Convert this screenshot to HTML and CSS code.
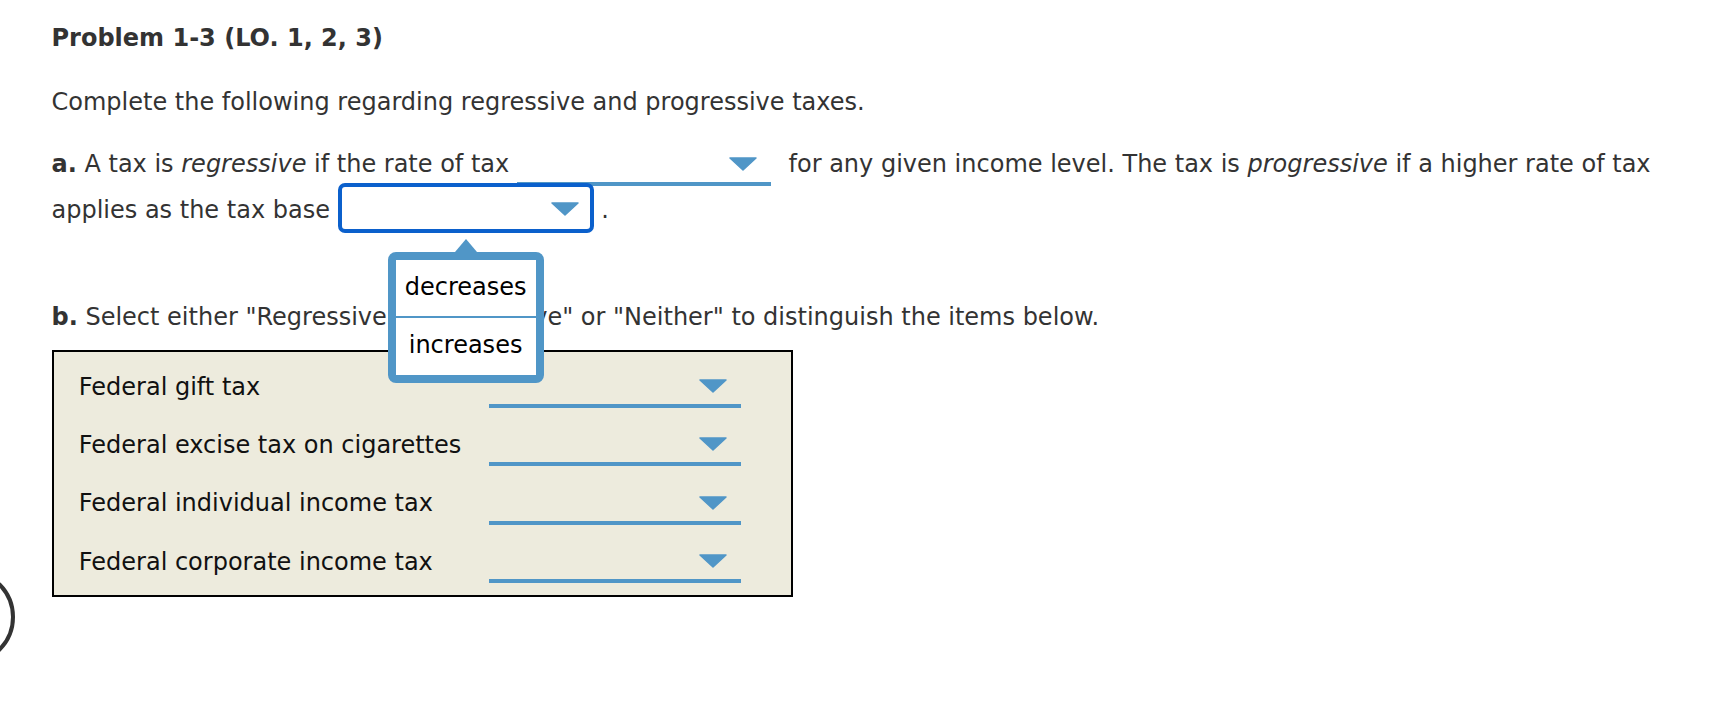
FILE: index.html
```html
<!DOCTYPE html>
<html lang="en">
<head>
<meta charset="utf-8">
<title>Problem 1-3</title>
<link rel="stylesheet" href="styles.css">
</head>
<body>
<div class="page">
  <h1 class="title">Problem 1-3 (LO. 1, 2, 3)</h1>
  <p class="intro">Complete the following regarding regressive and progressive taxes.</p>
  <p class="part-a"><b>a.</b> A tax is <i>regressive</i> if the rate of tax <span class="dd dd-first"><svg class="arrow" viewBox="0 0 28 14" width="28" height="14"><polygon points="1,1 27,1 14,13" /></svg></span> <span>for any given income level. The tax is </span><i>progressive</i><span> if a higher rate of tax</span> <span>applies as the tax base</span> <span class="dd dd-focus"><svg class="arrow" viewBox="0 0 28 14" width="28" height="14"><polygon points="1,1 27,1 14,13" /></svg><span class="menu"><span class="menu-item">decreases</span><span class="menu-item">increases</span></span></span> .</p>
  <p class="part-b"><b>b.</b> Select either "Regressive," "Progressive" or "Neither" to distinguish the items below.</p>
  <div class="items">
    <div class="item-row"><span class="item-label">Federal gift tax</span><span class="dd dd-row"><svg class="arrow" viewBox="0 0 28 14" width="28" height="14"><polygon points="1,1 27,1 14,13" /></svg></span></div>
    <div class="item-row"><span class="item-label">Federal excise tax on cigarettes</span><span class="dd dd-row"><svg class="arrow" viewBox="0 0 28 14" width="28" height="14"><polygon points="1,1 27,1 14,13" /></svg></span></div>
    <div class="item-row"><span class="item-label">Federal individual income tax</span><span class="dd dd-row"><svg class="arrow" viewBox="0 0 28 14" width="28" height="14"><polygon points="1,1 27,1 14,13" /></svg></span></div>
    <div class="item-row"><span class="item-label">Federal corporate income tax</span><span class="dd dd-row"><svg class="arrow" viewBox="0 0 28 14" width="28" height="14"><polygon points="1,1 27,1 14,13" /></svg></span></div>
  </div>
</div>
<div class="fab"></div>
</body>
</html>
```

FILE: styles.css
```css
* { box-sizing: border-box; }

html, body {
  margin: 0;
  padding: 0;
  background: #fff;
}

body {
  position: relative;
  height: 724px;
  overflow: hidden;
  font-family: "DejaVu Sans", Verdana, sans-serif;
  font-size: 24px;
  color: #333;
}

.page {
  padding: 23.4px 40px 0 51.5px;
}

.title {
  margin: 0;
  font-size: 24px;
  font-weight: bold;
  line-height: 30px;
}

.intro {
  margin: 33.3px 0 0;
  line-height: 30px;
}

.part-a {
  margin: 24.3px 0 0;
  line-height: 46px;
}

.arrow {
  display: block;
  fill: #5096c7;
  stroke: #5096c7;
  stroke-width: 1.5;
  stroke-linejoin: round;
}

.dd {
  display: inline-flex;
  justify-content: flex-end;
  align-items: flex-end;
  width: 254px;
  height: 44px;
  padding: 0 14px 11px 0;
  border-bottom: 4px solid #5096c7;
  vertical-align: top;
}

.dd-first {
  margin-top: 1px;
  margin-right: 10px;
}

.dd-focus {
  position: relative;
  width: 256px;
  height: 50.6px;
  margin-top: -4.3px;
  margin-bottom: -1px;
  padding: 0 11px 13.3px 0;
  border: 4px solid #0b60cc;
  border-radius: 7px;
  background: #fff;
}

.menu {
  position: absolute;
  left: 46px;
  top: 65.3px;
  z-index: 5;
  display: flex;
  flex-direction: column;
  width: 156px;
  border: 8px solid #5096c7;
  border-radius: 8px;
  background: #fff;
  color: #000;
  text-align: center;
}

.menu::before {
  content: "";
  position: absolute;
  left: 59px;
  top: -21px;
  border-left: 11px solid transparent;
  border-right: 11px solid transparent;
  border-bottom: 13px solid #5096c7;
}

.menu-item {
  display: block;
  height: 56px;
  line-height: 54px;
  padding-bottom: 2px;
}

.menu-item + .menu-item {
  height: 59.3px;
  padding-bottom: 3.3px;
  border-top: 2px solid #5096c7;
}

.part-b {
  margin: 68.7px 0 0;
  line-height: 30px;
}

.items {
  display: flex;
  flex-direction: column;
  gap: 10.33px;
  width: 741px;
  margin-top: 18.3px;
  padding: 8px 0 12.5px 25.3px;
  border: 2px solid #000;
  background: #edebdd;
  color: #111;
}

.item-row {
  display: flex;
  align-items: flex-end;
  height: 48px;
}

.item-label {
  width: 410.7px;
  line-height: 30px;
  padding-bottom: 6.3px;
}

.dd-row {
  width: 252px;
  height: 48px;
}

.fab {
  position: absolute;
  left: -81px;
  top: 569px;
  width: 96px;
  height: 96px;
  border: 4px solid #333;
  border-radius: 50%;
}
```
